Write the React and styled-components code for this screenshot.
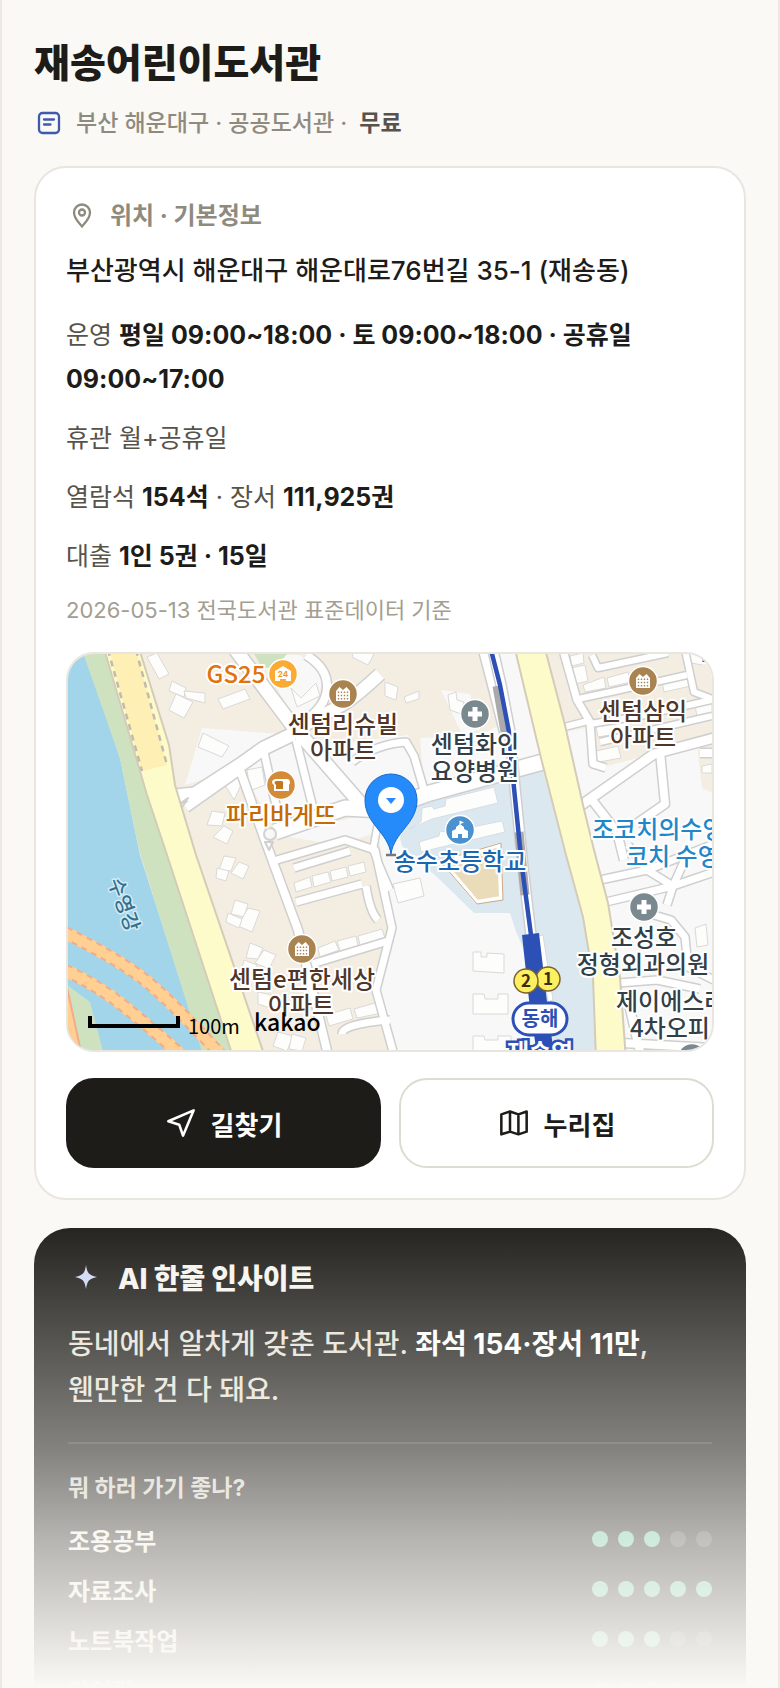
import React from 'react';
import styled, { createGlobalStyle, css } from 'styled-components';

const GlobalStyle = createGlobalStyle`
    * {
        box-sizing: border-box;
    }

    body {
        margin: 0;
        background-color: #faf9f5;
        color: #1d1c18;
        font-family: Inter, "Noto Sans CJK KR", sans-serif;
        word-break: keep-all;
    }
`;

const Page = styled.main`
    position: relative;
    height: 100vh;
    overflow: hidden;
    padding: 38px 32px 0;
    border-left: 2px solid #ebe9e2;
    border-right: 2px solid #ebe9e2;

    h1 {
        margin: 0 0 16px;
        font-size: 39px;
        line-height: 50px;
        font-weight: 800;
    }
`;

const Meta = styled.div`
    display: flex;
    align-items: center;
    margin-bottom: 24px;
    font-size: 23px;
    line-height: 38px;
    font-weight: 500;
    color: #8f8a7e;

    svg {
        margin-right: 12px;
    }

    strong {
        margin-left: 12px;
        font-weight: 600;
        color: #57534a;
    }
`;

const Card = styled.section`
    padding: 30px;
    border: 2px solid #e9e6df;
    border-radius: 32px;
    background-color: #fff;
`;

const CardTitle = styled.h2`
    display: flex;
    align-items: center;
    gap: 12px;
    margin: 0 0 15px;
    font-size: 24px;
    line-height: 36px;
    font-weight: 700;
    color: #8f8a7e;
`;

const Address = styled.p`
    margin: 0 0 20px;
    font-size: 26px;
    line-height: 44px;
    font-weight: 500;
`;

const Info = styled.p`
    margin: 0 0 15px;
    font-size: 25px;
    line-height: 44px;
    color: #57534a;

    b {
        font-weight: 700;
        color: #1d1c18;
    }
`;

const Source = styled.p`
    margin: 0 0 25px;
    font-size: 22px;
    line-height: 34px;
    color: #a39e92;
`;

const MapBox = styled.div`
    height: 400px;
    overflow: hidden;
    border: 2px solid #e9e6df;
    border-radius: 28px;

    svg {
        display: block;
        width: 100%;
        height: 100%;
    }
`;

const Actions = styled.div`
    display: flex;
    gap: 18px;
    margin-top: 26px;
`;

const Action = styled.a`
    flex: 1;
    display: flex;
    align-items: center;
    justify-content: center;
    gap: 14px;
    height: 90px;
    border: 2px solid #dedbd1;
    border-radius: 28px;
    font-size: 26px;
    font-weight: 700;
    color: #1d1c18;
    text-decoration: none;

    ${props => props.$dark && css`
        border-color: #1d1c18;
        background-color: #1d1c18;
        color: #fff;
    `}
`;

const Insight = styled.section`
    margin-top: 28px;
    padding: 31px 34px;
    border-radius: 36px;
    background-color: #1d1c18;
    color: #f6f4ee;

    h2 {
        display: flex;
        align-items: center;
        gap: 14px;
        margin: 0 0 22px;
        font-size: 28px;
        line-height: 40px;
        font-weight: 800;
    }

    p {
        margin: 0;
        padding-bottom: 29px;
        border-bottom: 2px solid rgba(255, 255, 255, 0.12);
        font-size: 28px;
        line-height: 46px;
        font-weight: 500;
        color: #e6e2d8;
    }

    p b {
        color: #fff;
    }

    h3 {
        margin: 27px 0 9px;
        font-size: 23px;
        line-height: 34px;
        font-weight: 700;
        color: #d5d1c6;
    }
`;

const Score = styled.div`
    display: flex;
    align-items: center;
    justify-content: space-between;
    height: 50px;
    font-size: 24px;
    font-weight: 600;
`;

const Dots = styled.div`
    display: flex;
    gap: 10px;
`;

const Dot = styled.i`
    width: 16px;
    height: 16px;
    border-radius: 50%;
    background-color: ${props => props.$on ? '#6fc9a3' : 'rgba(255, 255, 255, 0.18)'};
`;

const Fade = styled.div`
    position: absolute;
    left: 0;
    right: 0;
    bottom: 0;
    height: 480px;
    background: linear-gradient(
        rgba(250, 249, 245, 0) 0%,
        rgba(250, 249, 245, 0.47) 51%,
        rgba(250, 249, 245, 0.69) 69%,
        rgba(250, 249, 245, 0.9) 90%,
        #faf9f5 100%
    );
    pointer-events: none;
`;

// --------ICONS--------
const LibraryIcon = () => (
    <svg width="30" height="30" fill="none" stroke="#3f59ab" strokeWidth="2.3" strokeLinecap="round">
        <rect x="5" y="5" width="20" height="20" rx="3.5" />
        <path d="M10 11.5h10M10 16.5h6.5" />
    </svg>
);

const PinIcon = () => (
    <svg width="32" height="32" fill="none" stroke="#8f8a7e" strokeWidth="2.3" strokeLinejoin="round">
        <path d="M16 26.5C13.5 23 8 19 8 12.5a8 8 0 0 1 16 0c0 6.5-5.5 10.5-8 14z" />
        <circle cx="16" cy="12.5" r="3" />
    </svg>
);

const RouteIcon = () => (
    <svg width="32" height="32" viewBox="0 0 24 24" fill="none" stroke="currentColor" strokeWidth="1.9" strokeLinejoin="round">
        <path d="M2.5 10.7 21.5 2.5 13.5 21.5 10.7 13.3z" />
    </svg>
);

const SiteIcon = () => (
    <svg width="32" height="32" viewBox="0 0 24 24" fill="none" stroke="currentColor" strokeWidth="1.9" strokeLinejoin="round">
        <path d="M2.5 5.500 9 3.400l6.300 2.100 6.200-2.100v15.100l-6.200 2-6.300-2-6.500 2zM9 3.400v15.100M15.300 5.500v15" />
    </svg>
);

const SparkIcon = () => (
    <svg width="36" height="36" fill="#cdd8f5">
        <path d="M18 4c1.3 8.3 3 10.2 11 12-8 1.800-9.700 3.700-11 12-1.300-8.300-3-10.200-11-12 8-1.800 9.700-3.700 11-12z" />
    </svg>
);

// --------MAP--------
const roads = [
    { w: 13, d: 'M175 796 195 794 240 765 264 748 293 734' },
    { w: 13, d: 'M232 645 293 726 368 812' },
    { w: 12, d: 'M290 733 340 706 Q352 700 380 674' },
    { w: 8, d: 'M306 655Q328 668 327 688T300 724' },
    { w: 15, d: 'M275 832 345 808 382 810 430 793 550 760' },
    { w: 8, d: 'M186 808 240 770 266 843 298 930 328 1055' },
    { w: 7, d: 'M264 752 273 793 282 828' },
    { w: 7, d: 'M296 740 313 808' },
    { w: 7, d: 'M352 762Q376 744 406 742L414 756 424 790' },
    { w: 6, d: 'M380 812 373 850 390 890' },
    { w: 7, d: 'M270 862 345 840 375 850 392 928 376 990 394 1055' },
    { w: 7, d: 'M294 868 350 851M296 902 362 884M366 886Q370 912 378 920M312 964 388 941M342 1034Q342 1024 390 1020' },
    { w: 8, d: 'M483 650 496 700 506 740' },
    { w: 7, d: 'M563 650 577 700 590 722 593 764 606 768' },
    { w: 6, d: 'M564 727 588 721M578 699 620 690 687 675M685 650 694 692 715 700M592 655 598 668 668 653' },
    { w: 6, d: 'M590 724 640 716 712 700M600 742 712 716' },
    { w: 9, d: 'M580 806 654 754 714 738' },
    { w: 8, d: 'M660 752 665 804 636 824M592 800 617 832 624 860M700 753 714 753' },
    { w: 7, d: 'M600 880 647 870 714 844M606 902 673 886 714 872M628 845 647 870 673 886 667 905' },
    { w: 7, d: 'M647 913 671 920 685 937 688 967 714 980M618 983 657 980 700 989M673 886 687 855' },
    { w: 8, d: 'M622 1043 714 1048M628 1000 640 1052' },
];

const buildings = [
    '147,657 157,653 169,674 159,679', '172,681 186,688 184,697 169,691', '184,691 205,693 205,703 186,698',
    '176,694 193,702 184,718 169,710', '218,699 245,689 250,699 223,709', '203,733 229,746 222,757 198,747',
    '247,770 262,767 265,785 250,791', '225,785 236,776 242,783 234,800', '212,811 225,813 222,826 207,825',
    '224,826 233,831 227,844 213,837', '291,688 301,698 316,683 320,696 297,707', '354,649 374,654 368,665 352,657',
    '385,682 398,687 396,700 385,696', '404,697 419,691 419,699 406,703', '448,695 456,692 457,700 464,702 461,714 450,710',
    '224,856 236,858 231,871 219,870', '239,862 249,866 243,879 231,873', '217,868 229,871 226,881 216,878',
    '235,900 248,904 244,917 231,914', '248,908 260,911 252,932 238,926', '228,913 242,919 239,928 226,922',
    '250,943 263,948 258,959 246,958', '264,950 276,955 269,969 255,963', '244,960 257,965 253,972 242,968',
    '258,992 280,997 276,1010 258,1004', '278,1032 293,1036 287,1051 273,1046', '292,1034 306,1038 302,1051 289,1049',
    '294,883 310,877 312,887 296,892', '312,876 328,872 331,882 314,887', '330,871 346,867 348,877 332,881',
    '348,866 364,862 366,872 350,876', '318,948 335,941 339,950 320,957', '337,941 356,936 358,946 340,951',
    '358,936 382,929 385,938 360,945', '326,1015 350,1008 353,1019 329,1026', '354,1009 378,1002 382,1013 357,1018',
    '393,884 420,878 424,896 398,903', '473,952 481,952 481,957 487,957 487,953 504,954 504,973 473,971',
    '473,994 484,994 485,999 498,999 498,994 508,994 508,1014 473,1014',
    '473,1036 484,1036 485,1040 498,1040 498,1036 511,1036 511,1055 473,1055',
    '570,656 583,653 584,663 572,666', '571,668 585,665 588,681 575,684',
    '583,685 604,677 606,688 585,692', '607,678 628,672 631,682 609,687', '662,681 687,675 691,686 664,692',
    '695,704 712,698 712,713 697,717', '596,727 628,721 630,732 598,737', '592,752 618,746 621,758 594,763',
    '684,653 704,654 701,665 684,661', '702,766 712,764 712,773 702,773', '695,928 706,924 708,945 697,947',
];

const labels = [
    { x: 236, y: 683, text: 'GS25', color: '#e0720f' },
    { x: 343, y: 733, text: '센텀리슈빌', color: '#4f3628' },
    { x: 343, y: 759, text: '아파트', color: '#4f3628' },
    { x: 281, y: 824, text: '파리바게뜨', color: '#c56a05' },
    { x: 475, y: 753, text: '센텀화인', color: '#333f47' },
    { x: 475, y: 780, text: '요양병원', color: '#333f47' },
    { x: 643, y: 720, text: '센텀삼익', color: '#4f3628' },
    { x: 643, y: 746, text: '아파트', color: '#4f3628' },
    { x: 592, y: 838, text: '조코치의수영장', color: '#1f87c9', anchor: 'start' },
    { x: 626, y: 865, text: '코치 수영장', color: '#1f87c9', anchor: 'start' },
    { x: 460, y: 870, text: '송수초등학교', color: '#1a66b3' },
    { x: 644, y: 946, text: '조성호', color: '#333f47' },
    { x: 643, y: 973, text: '정형외과의원', color: '#333f47' },
    { x: 616, y: 1010, text: '제이에스라', color: '#333f47', anchor: 'start' },
    { x: 630, y: 1037, text: '4차오피', color: '#333f47', anchor: 'start' },
    { x: 302, y: 988, text: '센텀e편한세상', color: '#4f3628' },
    { x: 301, y: 1014, text: '아파트', color: '#4f3628' },
    { x: 700, y: 665, text: '티', color: '#1a66b3', anchor: 'start' },
];

const Marker = ({ x, y, color, children }) => (
    <g transform={`translate(${x} ${y})`}>
        <circle r="14.5" fill={color} stroke="#fff" strokeWidth="1.5" />
        {children}
    </g>
);

const Apartment = ({ x, y }) => (
    <Marker x={x} y={y} color="#a98450">
        <path d="M-7-3l3.500-4L0-4l3.500-3L7-3V7H-7z" fill="#fff" />
        <path d="M-4.500-2.500V6M-1.500-2.500V6M1.500-2.500V6M4.500-2.500V6" stroke="#a98450" strokeWidth="1.4" strokeDasharray="1.5 1.8" />
    </Marker>
);

const Hospital = ({ x, y }) => (
    <Marker x={x} y={y} color="#7a8990">
        <path d="M-7 0H7M0-7V7" stroke="#fff" strokeWidth="5" />
    </Marker>
);

const LibraryMap = () => (
    <svg viewBox="68 654 644 396" preserveAspectRatio="xMidYMid slice" role="img" aria-label="재송어린이도서관 지도"
        fontFamily="'Noto Sans CJK KR', sans-serif" fontSize="24" fontWeight="500">
        <path fill="#f4ede2" d="M60 640H720V1060H60z" />

        {/* open ground */}
        <g fill="#f8f8f8">
            <path d="M202 728 293 735 357 808 273 825 240 768 185 785z" />
            <path d="M300 738 352 742 408 735 430 793 370 808z" />
            <path d="M258 655 300 655 324 676 316 705 296 722z" />
            <path d="M441 690 470 694 480 730 462 734z" />
            <path d="M420 738 480 735 510 720 515 775 425 795z" />
            <path d="M494 650 516 650 541 758 515 770z" />
            <path d="M375 815 400 800 560 780 560 1055 394 1055 380 985 395 935z" />
            <path d="M565 732 586 728 600 768 660 752 697 745 702 788 714 794V1055H620z" />
            <path d="M276 835 340 845 372 834 378 812z" />
        </g>
        <path fill="#cfe2c0" d="M252 650 290 650 276 668 262 668z" />

        {/* school grounds */}
        <path fill="#dce8f0" d="M400 838 414 800 542 769 566 850 583 917 594 977 597 1055 540 1055 525 960 510 913 474 913 438 878 402 846z" />
        <path fill="#f8f8f8" d="M510 918 524 950 538 1055 505 1055z" />
        <path fill="#eadcb9" stroke="#fff" strokeWidth="4" d="M443 862 499 845 501 898 477 902z" />
        <path fill="none" stroke="#c9a986" d="M440 861 501 843 503 900 477 904z" />

        {/* river and embankment */}
        <path fill="#a2d5ea" d="M60 640H80L120 758 140 855 204 1055H60z" />
        <path fill="#cfe2c0" d="M82 650H105L147 795 167 855 234 1055H203L139 850 120 758z" />
        <path fill="#cfe2c0" d="M60 980 90 1002 104 1055H60z" />
        <path fill="none" stroke="#f1ab8d" strokeWidth="13" d="M60 930Q120 960 145 980T222 1056M60 968Q95 983 125 1007T182 1056M62 990 76 1055" />
        <path fill="none" stroke="#ffd092" strokeWidth="9" d="M60 930Q120 960 145 980T222 1056M60 968Q95 983 125 1007T182 1056M62 990 76 1055" />
        <path fill="none" stroke="#ffd092" strokeWidth="13" strokeDasharray="5 6" d="M60 930Q120 960 145 980T222 1056M60 968Q95 983 125 1007T182 1056" />

        <g fill="#fdfdfc" stroke="#dbd9d7">
            {buildings.map(points => <polygon key={points} points={points} />)}
            <path stroke="#d5dee4" d="M409 829 421 822 422 808 432 806 434 809 445 806 446 799 494 787 498 803 432 819 410 829z" />
            <path stroke="#d5dee4" d="M419 842 439 836 440 831 447 832 502 821 505 832 421 852z" />
        </g>

        {/* streets */}
        <g fill="none" stroke="#cfcfd0" strokeLinejoin="round">
            {roads.map(road => <path key={road.d} d={road.d} strokeWidth={road.w + 3} />)}
        </g>
        <g fill="none" stroke="#fff" strokeLinejoin="round">
            {roads.map(road => <path key={road.d} d={road.d} strokeWidth={road.w} />)}
            <circle cx="270" cy="834" r="6" stroke="#d2d2d3" strokeWidth="2" fill="#f8f8f8" />
            <path d="M181 803 188 798 181 809zM265 842 273 842 269 850z" stroke="#cfcfd0" strokeWidth="2" />
        </g>

        {/* main roads */}
        <g fill="#fefbca" stroke="#d4cbb8" strokeWidth="2">
            <path d="M103 645 147 795 167 855 234 1060H266L196 855 175 785 169 745 138 645z" />
            <path d="M514 645 541 758 566 855 583 917 593 977 596 1060H626L620 977 608 903 594 850 583 805 565 725 544 645z" />
        </g>
        <path fill="#fef0b4" d="M109 650H136L167 765 142 771z" />
        <path fill="none" stroke="#c3bba9" strokeWidth="2.5" strokeDasharray="6 5" d="M108 650 142 771M136 650 167 765" />

        {/* railway */}
        <path fill="none" stroke="#cfcfd2" strokeWidth="12" d="M493 650 501 685 510 732 514 778 523 867 531 935" />
        <path fill="none" stroke="#fff" strokeWidth="9" d="M493 650 501 685 510 732 514 778 523 867 531 935" />
        <path fill="none" stroke="#aaa9ac" strokeWidth="9" d="M497 686 505 732M519 832 525 895" />
        <path fill="none" stroke="#2c50b6" strokeWidth="4.5" d="M491 650 500 685 509 732 513 778 522 867 531 935" />
        <path fill="#fff" stroke="#d7d9dd" d="M538 936 543 935 553 1000 548 1002z" />
        <path fill="#2c50b6" d="M522 935 539 933 547 1002 554 1055H537L529 1000z" />

        <g stroke="#fff" strokeWidth="4" strokeLinejoin="round" paintOrder="stroke">
            {labels.map(label => (
                <text key={label.text + label.y} x={label.x} y={label.y} fill={label.color} textAnchor={label.anchor || 'middle'}>
                    {label.text}
                </text>
            ))}
            <text transform="translate(108 881) rotate(70)" fontSize="20" fill="#35718f" stroke="#d3ebf5" strokeWidth="3">수영강</text>
        </g>

        <Marker x={283} y={674} color="#fbab33">
            <path d="M-8-3 0-8 8-3V7H3V5H-3V7H-8z" fill="#fff" />
            <text y="3" fontFamily="Inter, sans-serif" fontSize="8" fontWeight="700" fill="#f0981c" textAnchor="middle">24</text>
        </Marker>
        <Marker x={281} y={785} color="#d48b37">
            <path d="M-6-6H6Q9-6 9-2L8 0V6H-7V0Q-9-1-9-3T-6-6z" fill="#fff" />
            <path d="M-5-4H0Q3-4 2-1V4H-5V0Q-8-3-5-4z" fill="#c37820" />
        </Marker>
        <Marker x={460} y={830} color="#4b91d0">
            <path d="M-8 8V1L-4-1V-3L0-6 4-3V-1L8 1V8H2V4H-2V8zM-.5-9.5 4-7.5 .5-6V-4H-.5z" fill="#fff" />
        </Marker>
        <Apartment x={343} y={694} />
        <Apartment x={643} y={681} />
        <Apartment x={302} y={949} />
        <Hospital x={475} y={714} />
        <Hospital x={644} y={907} />
        <Hospital x={692} y={1058} />

        {/* station */}
        <text x="540" y="1061" textAnchor="middle" fill="#fff" stroke="#2c50b6" strokeWidth="5" paintOrder="stroke" fontWeight="700">재송역</text>
        <rect x="513" y="1003" width="54" height="32" rx="16" fill="#fff" stroke="#2c50b6" strokeWidth="3" />
        <g textAnchor="middle" fontWeight="700">
            <text x="540" y="1026" fontSize="20" fill="#2c50b6">동해</text>
            <circle cx="548" cy="979" r="12" fill="#fdf05f" stroke="#786231" strokeWidth="1.5" />
            <text x="548" y="985" fontSize="17" fill="#3b2c16">1</text>
            <circle cx="526" cy="981" r="12" fill="#fdf05f" stroke="#786231" strokeWidth="1.5" />
            <text x="526" y="987" fontSize="17" fill="#3b2c16">2</text>
        </g>

        {/* current library */}
        <path stroke="#777" strokeWidth="2.5" d="M386 855H396" />
        <path fill="#258bfb" stroke="#1769ca" d="M391 854C388 832 365 824 365 800a26 26 0 0 1 52 0C417 824 394 832 391 854z" />
        <circle cx="391" cy="800" r="13" fill="#fff" />
        <path fill="#258bfb" d="M386 798H396L391 804z" />

        <path fill="none" stroke="#000" strokeWidth="4" d="M90 1016V1026H178V1016" />
        <text x="188" y="1034" fontSize="20" fontWeight="400">100m</text>
        <text x="254" y="1031" fontSize="23">kakao</text>
    </svg>
);

const scores = [
    { name: '조용공부', value: 3 },
    { name: '자료조사', value: 5 },
    { name: '노트북작업', value: 3 },
    { name: '아이랑', value: 4 },
];

class App extends React.Component {
    render() {
        return (
            <Page>
                <GlobalStyle />
                <h1>재송어린이도서관</h1>
                <Meta>
                    <LibraryIcon />
                    <span>부산 해운대구 · 공공도서관 ·</span>
                    <strong>무료</strong>
                </Meta>

                <Card>
                    <CardTitle><PinIcon />위치 · 기본정보</CardTitle>
                    <Address>부산광역시 해운대구 해운대로76번길 35-1 (재송동)</Address>
                    <Info>운영 <b>평일 09:00~18:00 · 토 09:00~18:00 · 공휴일 09:00~17:00</b></Info>
                    <Info>휴관 월+공휴일</Info>
                    <Info>열람석 <b>154석</b> · 장서 <b>111,925권</b></Info>
                    <Info>대출 <b>1인 5권 · 15일</b></Info>
                    <Source>2026-05-13 전국도서관 표준데이터 기준</Source>
                    <MapBox><LibraryMap /></MapBox>
                    <Actions>
                        <Action href="#route" $dark><RouteIcon />길찾기</Action>
                        <Action href="#site"><SiteIcon />누리집</Action>
                    </Actions>
                </Card>

                <Insight>
                    <h2><SparkIcon />AI 한줄 인사이트</h2>
                    <p>동네에서 알차게 갖춘 도서관. <b>좌석 154·장서 11만</b>, 웬만한 건 다 돼요.</p>
                    <h3>뭐 하러 가기 좋나?</h3>
                    {scores.map(score => (
                        <Score key={score.name}>
                            <span>{score.name}</span>
                            <Dots>
                                {[1, 2, 3, 4, 5].map(n => <Dot key={n} $on={n <= score.value} />)}
                            </Dots>
                        </Score>
                    ))}
                </Insight>
                <Fade />
            </Page>
        );
    }
}

export default App;
